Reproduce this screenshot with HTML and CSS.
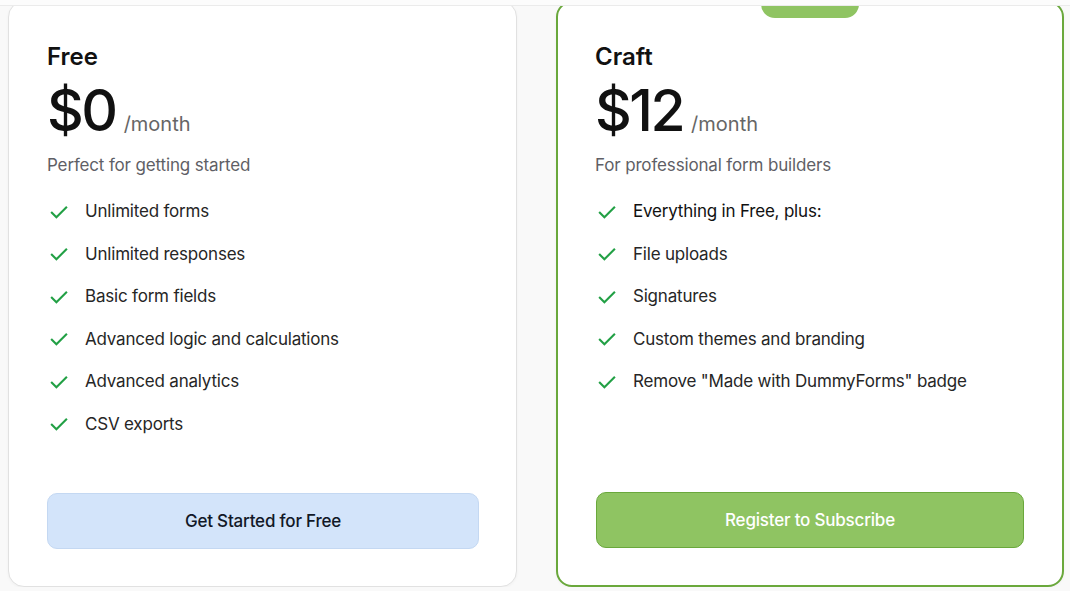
FILE: index.html
```html
<!DOCTYPE html>
<html lang="en">
<head>
    <meta charset="UTF-8">
    <meta name="viewport" content="width=device-width, initial-scale=1.0">
    <title>Pricing</title>
    <link rel="stylesheet" href="styles.css">
</head>
<body>
    <div class="topbar"></div>
    <div class="plans">
        <div class="plan">
            <h2 class="plan-name">Free</h2>
            <div class="price"><span class="amount">$0</span><span class="period">/month</span></div>
            <p class="tagline">Perfect for getting started</p>
            <ul class="features">
                <li><svg class="check" viewBox="0 0 20 20"><path d="M3 10.5l5 5L18 5.5"/></svg>Unlimited forms</li>
                <li><svg class="check" viewBox="0 0 20 20"><path d="M3 10.5l5 5L18 5.5"/></svg>Unlimited responses</li>
                <li><svg class="check" viewBox="0 0 20 20"><path d="M3 10.5l5 5L18 5.5"/></svg>Basic form fields</li>
                <li><svg class="check" viewBox="0 0 20 20"><path d="M3 10.5l5 5L18 5.5"/></svg>Advanced logic and calculations</li>
                <li><svg class="check" viewBox="0 0 20 20"><path d="M3 10.5l5 5L18 5.5"/></svg>Advanced analytics</li>
                <li><svg class="check" viewBox="0 0 20 20"><path d="M3 10.5l5 5L18 5.5"/></svg>CSV exports</li>
            </ul>
            <button class="btn btn-free">Get Started for Free</button>
        </div>

        <div class="plan featured">
            <span class="badge">Most Popular</span>
            <h2 class="plan-name">Craft</h2>
            <div class="price"><span class="amount">$12</span><span class="period">/month</span></div>
            <p class="tagline">For professional form builders</p>
            <ul class="features">
                <li class="lead"><svg class="check" viewBox="0 0 20 20"><path d="M3 10.5l5 5L18 5.5"/></svg>Everything in Free, plus:</li>
                <li><svg class="check" viewBox="0 0 20 20"><path d="M3 10.5l5 5L18 5.5"/></svg>File uploads</li>
                <li><svg class="check" viewBox="0 0 20 20"><path d="M3 10.5l5 5L18 5.5"/></svg>Signatures</li>
                <li><svg class="check" viewBox="0 0 20 20"><path d="M3 10.5l5 5L18 5.5"/></svg>Custom themes and branding</li>
                <li><svg class="check" viewBox="0 0 20 20"><path d="M3 10.5l5 5L18 5.5"/></svg>Remove "Made with DummyForms" badge</li>
            </ul>
            <button class="btn btn-craft">Register to Subscribe</button>
        </div>
    </div>
</body>
</html>
```

FILE: styles.css
```css
body {
    margin: 0;
    font-family: Inter, "Noto Sans", sans-serif;
    background-color: #f9f9f9;
    color: #222;
}

.topbar {
    position: fixed;
    top: 0;
    left: 0;
    right: 0;
    height: 5px;
    background-color: #fcfcfc;
    border-bottom: 1px solid #ebebeb;
    z-index: 10;
}

.plans {
    display: grid;
    grid-template-columns: 509px 508px;
    gap: 39px;
    padding: 1px 6px 0 8px;
}

.plan {
    position: relative;
    box-sizing: border-box;
    min-height: 586px;
    display: flex;
    flex-direction: column;
    background-color: #fff;
    border: 1px solid #e1e1e1;
    border-radius: 16px;
    padding: 39px 37px 37px 38px;
    box-shadow: 0 1px 3px rgba(0, 0, 0, 0.04);
}

.featured {
    border: 2px solid #6aa83c;
    padding: 38px 37px 37px 37px;
}

/* mostly tucked under the top bar */
.badge {
    position: absolute;
    top: -20px;
    left: 50%;
    transform: translateX(-50%);
    width: 98px;
    height: 35px;
    line-height: 20px;
    border-radius: 14px;
    background-color: #8fc462;
    color: #fff;
    font-size: 11px;
    font-weight: 600;
    text-align: center;
}

.plan-name {
    margin: 0;
    font-size: 24px;
    line-height: 32px;
    font-weight: 600;
    color: #111;
}

.price {
    display: flex;
    align-items: baseline;
    margin-top: 10px;
}

.amount {
    font-size: 57px;
    line-height: 56px;
    font-weight: 500;
    letter-spacing: -2.5px;
    color: #111;
}

.period {
    margin-left: 8px;
    font-size: 20px;
    color: #666;
}

.tagline {
    margin: 14px 0 0;
    font-size: 17px;
    line-height: 24px;
    letter-spacing: -0.15px;
    color: #5f5f66;
}

.features {
    list-style: none;
    margin: 22px 0 0;
    padding: 0;
    display: flex;
    flex-direction: column;
    gap: 18.5px;
}

.features li {
    display: flex;
    align-items: center;
    font-size: 17px;
    line-height: 24px;
    letter-spacing: -0.2px;
    color: #262626;
}

.features .lead {
    color: #111;
}

.check {
    width: 21px;
    height: 21px;
    margin-left: 1px;
    margin-right: 16px;
    fill: none;
    stroke: #22a045;
    stroke-width: 2;
}

.btn {
    margin-top: auto;
    height: 56px;
    border-radius: 10px;
    font-family: inherit;
    font-size: 17px;
    font-weight: 500;
    letter-spacing: -0.2px;
    cursor: pointer;
}

.btn-free {
    background-color: #d3e4fa;
    border: 1px solid #c4d8f2;
    color: #111827;
}

.btn-craft {
    margin-left: 1px;
    margin-right: 1px;
    background-color: #8fc462;
    border: 1px solid #6aa83c;
    color: #fff;
}
```
